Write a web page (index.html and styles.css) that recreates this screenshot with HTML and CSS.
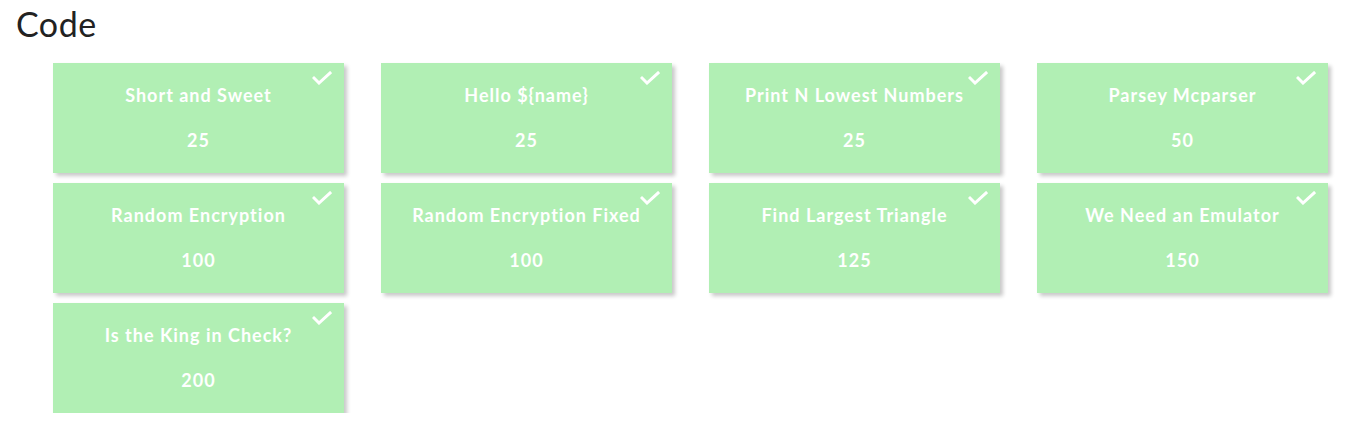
FILE: index.html
```html
<!DOCTYPE html>
<html>
<head>
<meta charset="utf-8">
<link rel="stylesheet" href="styles.css">
</head>
<body>
<h1 class="heading">Code</h1>
<div class="grid">
  <div class="card"><svg class="check" viewBox="0 0 20 14"><polyline points="2,7 7,12 18,2"/></svg><div class="title">Short and Sweet</div><div class="points">25</div></div>
  <div class="card"><svg class="check" viewBox="0 0 20 14"><polyline points="2,7 7,12 18,2"/></svg><div class="title">Hello ${name}</div><div class="points">25</div></div>
  <div class="card"><svg class="check" viewBox="0 0 20 14"><polyline points="2,7 7,12 18,2"/></svg><div class="title">Print N Lowest Numbers</div><div class="points">25</div></div>
  <div class="card"><svg class="check" viewBox="0 0 20 14"><polyline points="2,7 7,12 18,2"/></svg><div class="title">Parsey Mcparser</div><div class="points">50</div></div>
  <div class="card"><svg class="check" viewBox="0 0 20 14"><polyline points="2,7 7,12 18,2"/></svg><div class="title">Random Encryption</div><div class="points">100</div></div>
  <div class="card"><svg class="check" viewBox="0 0 20 14"><polyline points="2,7 7,12 18,2"/></svg><div class="title">Random Encryption Fixed</div><div class="points">100</div></div>
  <div class="card"><svg class="check" viewBox="0 0 20 14"><polyline points="2,7 7,12 18,2"/></svg><div class="title">Find Largest Triangle</div><div class="points">125</div></div>
  <div class="card"><svg class="check" viewBox="0 0 20 14"><polyline points="2,7 7,12 18,2"/></svg><div class="title">We Need an Emulator</div><div class="points">150</div></div>
  <div class="card"><svg class="check" viewBox="0 0 20 14"><polyline points="2,7 7,12 18,2"/></svg><div class="title">Is the King in Check?</div><div class="points">200</div></div>
</div>
</body>
</html>
```
FILE: styles.css
```css
html, body {
  margin: 0;
  padding: 0;
  background: #ffffff;
  font-family: Lato, "Open Sans", sans-serif;
}
.heading {
  margin: 0;
  padding: 4px 0 0 16px;
  font-size: 34px;
  font-weight: 400;
  line-height: 40px;
  letter-spacing: 0.5px;
  color: #222222;
}
.grid {
  display: grid;
  grid-template-columns: repeat(4, 291px);
  column-gap: 37px;
  row-gap: 10px;
  margin: 19px 0 0 53px;
}
.card {
  position: relative;
  height: 110px;
  background: #b1efb4;
  box-shadow: 3px 3px 4px rgba(0, 0, 0, 0.22);
  display: flex;
  flex-direction: column;
  align-items: center;
  padding-top: 22px;
  box-sizing: border-box;
  color: #ffffff;
  font-weight: 700;
  font-size: 18px;
  line-height: 20px;
  letter-spacing: 1px;
}
.title {
  white-space: nowrap;
}
.points {
  margin-top: 25px;
}
.check {
  position: absolute;
  top: 8px;
  right: 12px;
  width: 20px;
  height: 14px;
  fill: none;
  stroke: #ffffff;
  stroke-width: 3;
  stroke-linecap: square;
}
```
